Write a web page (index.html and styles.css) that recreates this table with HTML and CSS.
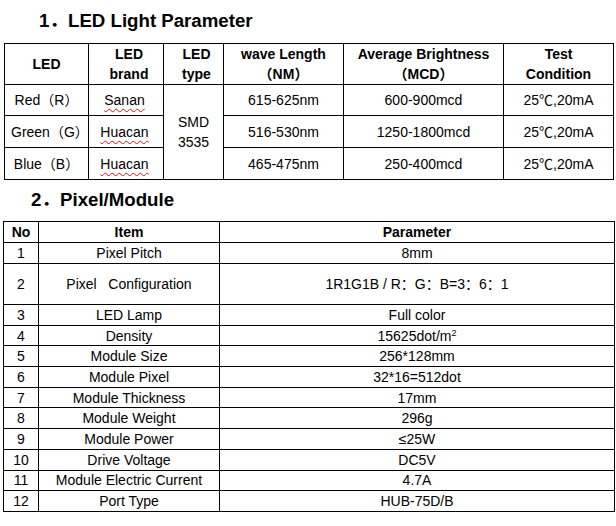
FILE: index.html
```html
<!DOCTYPE html>
<html>
<head>
<meta charset="utf-8">
<title>LED Parameters</title>
<link rel="stylesheet" href="styles.css">
</head>
<body>
<div class="page">
  <h2 class="title t1">1．LED Light Parameter</h2>
  <table class="spec led">
    <colgroup>
      <col class="c-led"><col class="c-brand"><col class="c-type"><col class="c-wave"><col class="c-bright"><col class="c-test">
    </colgroup>
    <tr class="head">
      <th>LED</th>
      <th class="shift">LED<br>brand</th>
      <th class="shift">LED<br>type</th>
      <th>wave Length<br>（NM）</th>
      <th>Average Brightness<br>（MCD）</th>
      <th>Test<br>Condition</th>
    </tr>
    <tr class="r1">
      <td>Red（R）</td>
      <td class="brand"><span class="spell">Sanan</span></td>
      <td rowspan="3" class="type">SMD<br>3535</td>
      <td>615-625nm</td>
      <td>600-900mcd</td>
      <td>25℃,20mA</td>
    </tr>
    <tr class="r2">
      <td class="green">Green（G）</td>
      <td class="brand"><span class="spell">Huacan</span></td>
      <td>516-530nm</td>
      <td>1250-1800mcd</td>
      <td>25℃,20mA</td>
    </tr>
    <tr class="r2">
      <td>Blue（B）</td>
      <td class="brand"><span class="spell">Huacan</span></td>
      <td>465-475nm</td>
      <td>250-400mcd</td>
      <td>25℃,20mA</td>
    </tr>
  </table>

  <h2 class="title t2">2．Pixel/Module</h2>
  <table class="spec pix">
    <colgroup>
      <col class="c-no"><col class="c-item"><col class="c-param">
    </colgroup>
    <tr class="head"><th>No</th><th>Item</th><th>Parameter</th></tr>
    <tr class="row"><td>1</td><td>Pixel Pitch</td><td>8mm</td></tr>
    <tr class="row tall"><td>2</td><td>Pixel&nbsp;&nbsp;&nbsp;Configuration</td><td>1R1G1B / R：G：B=3：6：1</td></tr>
    <tr class="row"><td>3</td><td>LED Lamp</td><td>Full color</td></tr>
    <tr class="row"><td>4</td><td>Density</td><td>15625dot/m<sup>2</sup></td></tr>
    <tr class="row"><td>5</td><td>Module Size</td><td>256*128mm</td></tr>
    <tr class="row"><td>6</td><td>Module Pixel</td><td>32*16=512dot</td></tr>
    <tr class="row"><td>7</td><td>Module Thickness</td><td>17mm</td></tr>
    <tr class="row"><td>8</td><td>Module Weight</td><td>296g</td></tr>
    <tr class="row"><td>9</td><td>Module Power</td><td>≤25W</td></tr>
    <tr class="row"><td>10</td><td>Drive Voltage</td><td>DC5V</td></tr>
    <tr class="row"><td>11</td><td>Module Electric Current</td><td>4.7A</td></tr>
    <tr class="row"><td>12</td><td>Port Type</td><td>HUB-75D/B</td></tr>
  </table>
</div>
</body>
</html>
```
FILE: styles.css
```css
html, body {
  margin: 0;
  padding: 0;
  background: #ffffff;
}

body {
  font-family: "Liberation Sans", Arial, "Noto Sans CJK SC", sans-serif;
  color: #000000;
}

.page {
  padding-top: 9px;
}

.title {
  margin: 0;
  font-size: 18.67px;
  font-weight: bold;
  line-height: 24px;
  white-space: nowrap;
}

.t1 {
  padding-left: 39px;
  margin-bottom: 10px;
}

.t2 {
  padding-left: 31px;
  margin-top: 8px;
  margin-bottom: 9px;
}

.spec {
  border-collapse: separate;
  border-spacing: 0;
  table-layout: fixed;
  border-left: 1px solid #000;
  border-top: 1px solid #000;
  font-size: 14px;
}

.spec th,
.spec td {
  box-sizing: border-box;
  padding: 0;
  border-right: 1px solid #000;
  border-bottom: 1px solid #000;
  text-align: center;
  vertical-align: middle;
  white-space: nowrap;
}

.spec th {
  font-weight: bold;
}

/* Table 1 */
.led {
  margin-left: 4px;
  width: 610px;
  line-height: 20px;
}

.c-led { width: 84px; }
.c-brand { width: 75px; }
.c-type { width: 60px; }
.c-wave { width: 120px; }
.c-bright { width: 160px; }
.c-test { width: 110px; }

.led .head th { height: 41px; }
.led .r1 td { height: 31px; }
.led .r2 td { height: 32px; }

.led .shift { padding-left: 6px; }

.led .brand { padding-right: 3px; }

.led .green { padding-left: 6px; }

.spell {
  text-decoration: underline wavy #e01010;
  text-decoration-thickness: 1px;
  text-underline-offset: 3px;
  text-decoration-skip-ink: none;
}

/* Table 2 */
.pix {
  margin-left: 3px;
  width: 612px;
  line-height: 18px;
}

.c-no { width: 35px; }
.c-item { width: 181px; }
.c-param { width: 395px; }

.pix .head th { height: 21px; }
.pix .row td { height: 20.7px; }
.pix .row:nth-child(2) td { height: 21px; }
.pix .row.tall td { height: 41px; }

sup {
  font-size: 9px;
  line-height: 0;
  vertical-align: 5px;
}
```
